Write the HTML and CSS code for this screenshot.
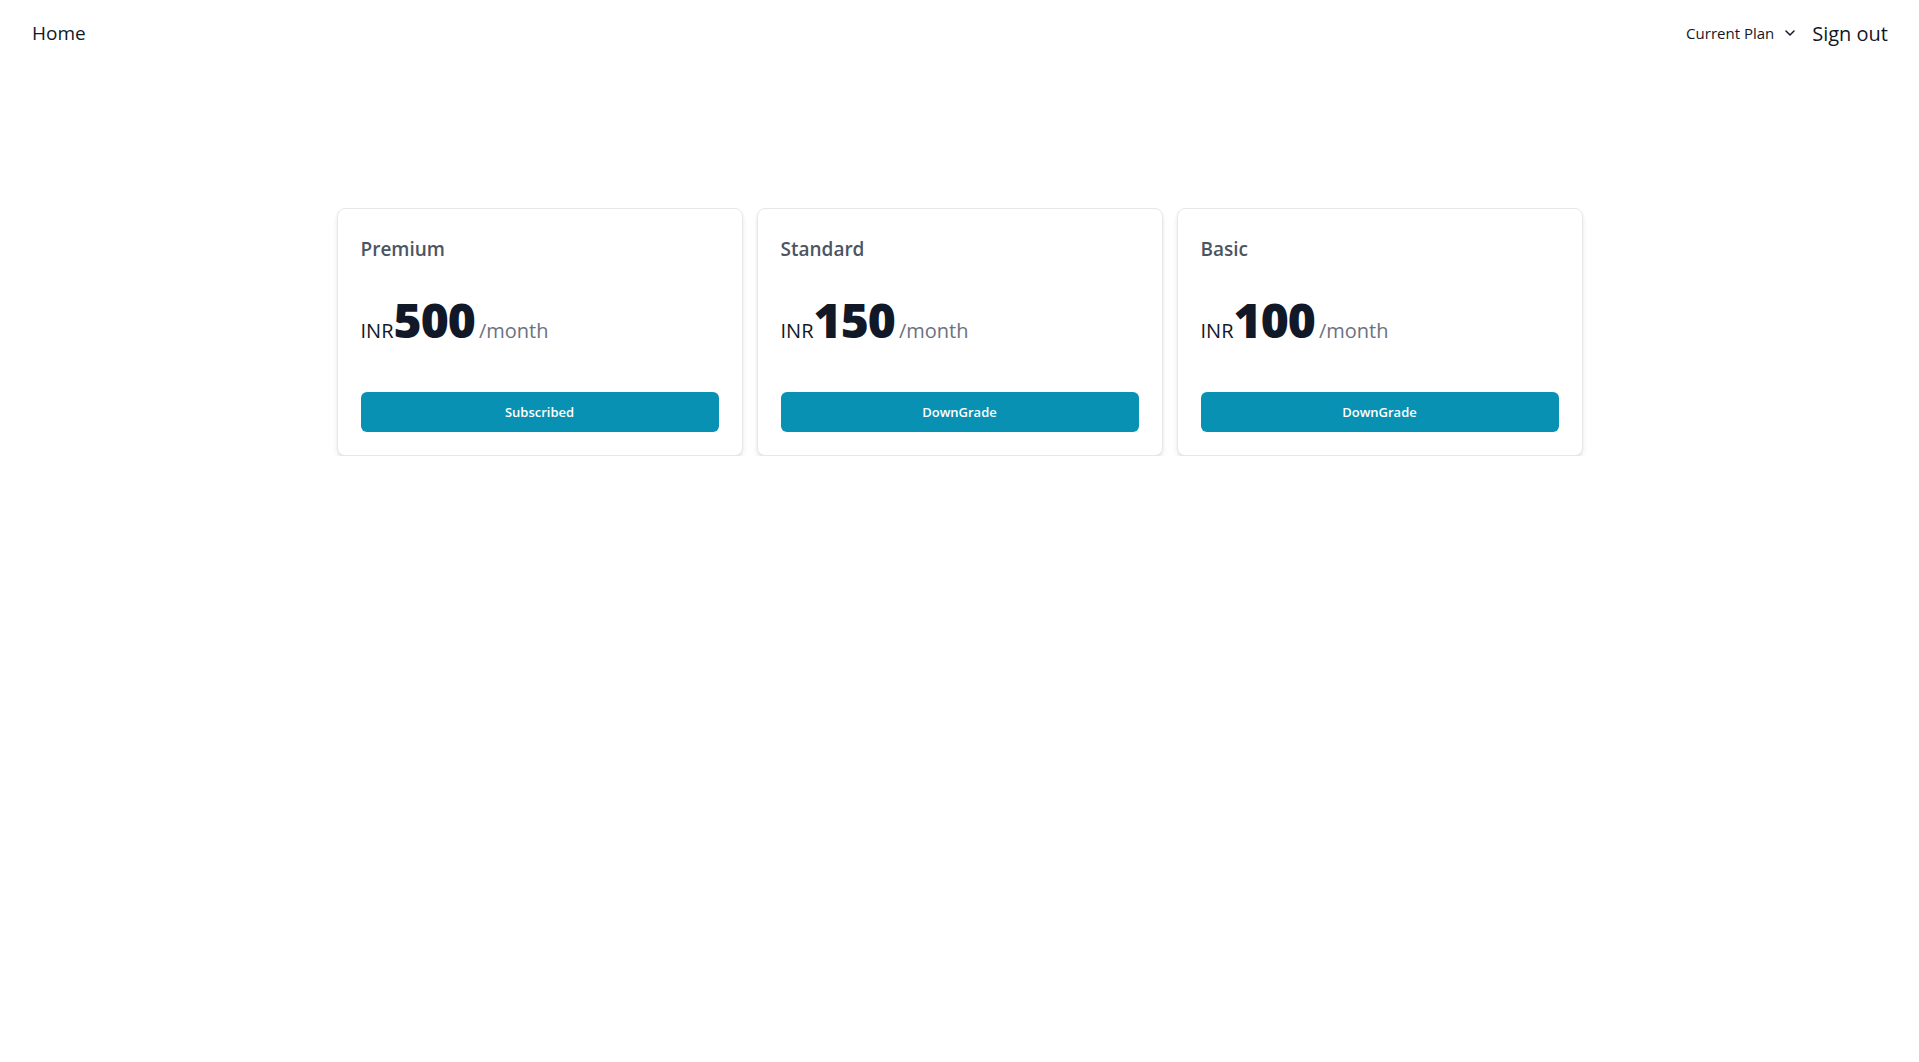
FILE: index.html
```html
<!DOCTYPE html>
<html lang="en">
<head>
<meta charset="utf-8">
<title>Plans</title>
<link rel="stylesheet" href="styles.css">
</head>
<body>
<header class="topbar">
  <a class="home" href="#">Home</a>
  <nav class="right">
    <button class="plan-menu">Current Plan
      <svg class="chev" width="10" height="6" viewBox="0 0 10 6"><path d="M1 1l4 4 4-4" fill="none" stroke="#111827" stroke-width="1.5" stroke-linecap="round" stroke-linejoin="round"/></svg>
    </button>
    <a class="signout" href="#">Sign out</a>
  </nav>
</header>
<main class="plans">
  <section class="card">
    <h2 class="title">Premium</h2>
    <div class="price"><span class="cur">INR</span><span class="amt">500</span><span class="per">/month</span></div>
    <button class="btn">Subscribed</button>
  </section>
  <section class="card">
    <h2 class="title">Standard</h2>
    <div class="price"><span class="cur">INR</span><span class="amt">150</span><span class="per">/month</span></div>
    <button class="btn">DownGrade</button>
  </section>
  <section class="card">
    <h2 class="title">Basic</h2>
    <div class="price"><span class="cur">INR</span><span class="amt">100</span><span class="per">/month</span></div>
    <button class="btn">DownGrade</button>
  </section>
</main>
</body>
</html>
```
FILE: styles.css
```css
* { box-sizing: border-box; }
body {
  margin: 0;
  background: #fff;
  font-family: "Open Sans", "Noto Sans", sans-serif;
  color: #111827;
}
.topbar {
  display: flex;
  justify-content: space-between;
  align-items: center;
  height: 66px;
  padding: 0 31px 0 32px;
}
.home {
  font-size: 19px;
  color: #111827;
  text-decoration: none;
}
.right {
  display: flex;
  align-items: center;
  gap: 17px;
}
.plan-menu {
  display: flex;
  align-items: center;
  gap: 11px;
  background: none;
  border: 0;
  padding: 0;
  font: inherit;
  font-size: 15px;
  color: #111827;
}
.signout {
  font-size: 20px;
  color: #111827;
  text-decoration: none;
}
.plans {
  display: flex;
  justify-content: center;
  gap: 14px;
  margin-top: 142px;
}
.card {
  width: 406px;
  border: 1px solid #e5e7eb;
  border-radius: 8px;
  background: #fff;
  padding: 23px;
  box-shadow: 0 4px 6px -1px rgba(0,0,0,0.1), 0 2px 4px -2px rgba(0,0,0,0.1);
}
.title {
  margin: 0;
  font-size: 19px;
  font-weight: 600;
  line-height: 28px;
  color: #4b5563;
  padding-top: 3px;
}
.price {
  display: flex;
  align-items: baseline;
  margin-top: 33px;
  line-height: 48px;
  height: 48px;
}
.cur {
  font-size: 20px;
  color: #111827;
}
.amt {
  font-size: 48px;
  font-weight: 800;
  letter-spacing: -1px;
  color: #111827;
}
.per {
  font-size: 20px;
  color: #6b7280;
  margin-left: 4px;
}
.btn {
  display: block;
  width: 100%;
  height: 40px;
  margin-top: 48px;
  border: 0;
  border-radius: 6px;
  background: #0891b2;
  color: #fff;
  font: inherit;
  font-size: 13px;
  font-weight: 600;
}
```
